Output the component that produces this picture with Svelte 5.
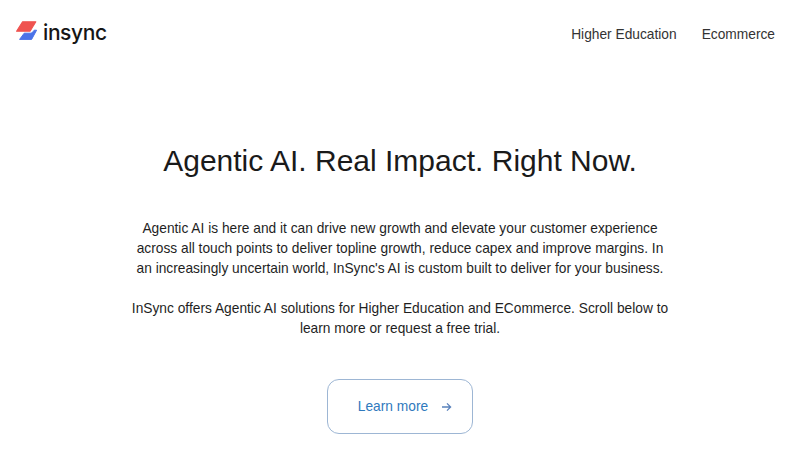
<script>
  const links = ['Higher Education', 'Ecommerce'];
</script>

<div class="page">
  <header class="nav">
    <a class="brand" href="#top">
      <svg class="mark" width="23" height="19" viewBox="0 0 23 19" aria-hidden="true">
        <path d="M19.2 9.2H21.6L16.6 18.4H4.6L9.2 12.2H15.4C16.6 12.2 17.4 11.7 18 10.8Z" fill="#4a72e8" stroke="#4a72e8" stroke-width="1" stroke-linejoin="round" />
        <path d="M7.6 0.8H20.8L15 10.2H1.6Z" fill="#ef5350" stroke="#ef5350" stroke-width="1.2" stroke-linejoin="round" />
      </svg>
      <span class="word">insync</span>
    </a>
    <nav class="links">
      {#each links as link}
        <a href="#top">{link}</a>
      {/each}
    </nav>
  </header>

  <main class="hero">
    <h1>Agentic AI. Real Impact. Right Now.</h1>
    <p class="first">Agentic AI is here and it can drive new growth and elevate your customer experience across all touch points to deliver topline growth, reduce capex and improve margins. In an increasingly uncertain world, InSync's AI is custom built to deliver for your business.</p>
    <p>InSync offers Agentic AI solutions for Higher Education and ECommerce. Scroll below to learn more or request a free trial.</p>
    <a class="cta" href="#top">
      <span>Learn more</span>
      <svg width="11" height="10" viewBox="0 0 11 10" aria-hidden="true">
        <path d="M1 5H9.6M6 1.4L9.6 5L6 8.6" fill="none" stroke="#5a82bc" stroke-width="1.3" />
      </svg>
    </a>
  </main>
</div>

<style>
  :global(body) {
    margin: 0;
    background: #fff;
    font-family: "Liberation Sans", Arial, sans-serif;
    color: #1a1a1a;
  }

  .page {
    height: 450px;
    overflow: hidden;
  }

  .nav {
    display: flex;
    justify-content: space-between;
    align-items: center;
    padding: 20px 25px 0 15px;
    height: 24px;
  }

  .brand {
    display: flex;
    align-items: center;
    gap: 5px;
    color: #161616;
    text-decoration: none;
  }

  .mark {
    margin-top: -3px;
  }

  .word {
    font-family: Inter, sans-serif;
    font-size: 21px;
    font-weight: 500;
    letter-spacing: -0.4px;
  }

  .links {
    display: flex;
    gap: 25px;
    margin-top: 4px;
  }

  .links a {
    font-size: 13.76px;
    color: #333;
    text-decoration: none;
  }

  .hero {
    display: flex;
    flex-direction: column;
    align-items: center;
    text-align: center;
    padding-top: 99px;
  }

  h1 {
    margin: 0 0 40px;
    font-size: 30px;
    font-weight: 400;
    line-height: 36px;
    color: #1a1a1a;
  }

  p {
    width: 540px;
    margin: 0 0 20px;
    font-size: 13.76px;
    line-height: 20px;
    color: #1f1f1f;
  }

  .cta {
    display: flex;
    align-items: center;
    justify-content: center;
    gap: 13px;
    box-sizing: border-box;
    width: 146px;
    height: 55px;
    padding-left: 10px;
    margin-top: 20px;
    border: 1px solid #9db6d4;
    border-radius: 12px;
    color: #2f79bd;
    font-size: 13.76px;
    text-decoration: none;
  }
</style>
